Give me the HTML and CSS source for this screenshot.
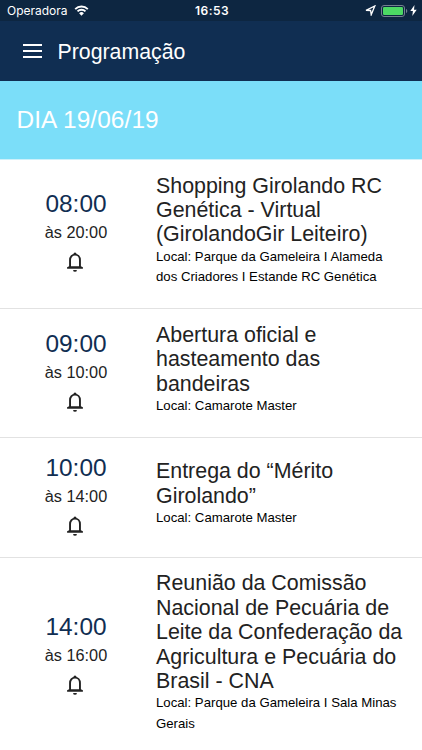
FILE: index.html
```html
<!DOCTYPE html>
<html lang="pt-BR">
<head>
    <meta charset="UTF-8">
    <meta name="viewport" content="width=device-width, initial-scale=1.0">
    <title>Programação</title>
    <link rel="stylesheet" href="styles.css">
</head>
<body>
    <svg width="0" height="0" class="sprite">
        <symbol id="bell" viewBox="0 0 18 21">
            <path d="M3.800 16V8.500C3.800 5 6 2.800 9 2.800s5.200 2.200 5.200 5.700V16" fill="none" stroke="#222" stroke-width="2"/>
            <path d="M7.400 3V2a1.600 1.600 0 0 1 3.200 0v1zM2.800 15h12.400l2.100 1v1.600H.700V16zM7 18.800h4a2 2 0 0 1-4 0z" fill="#222"/>
        </symbol>
    </svg>

    <header>
        <div class="status-bar">
            <div class="carrier">
                <span>Operadora</span>
                <svg width="15" height="11" viewBox="0 0 15 11">
                    <path d="M1.200 4.100a9 9 0 0 1 12.600 0M3.500 6.400a5.700 5.700 0 0 1 8 0" fill="none" stroke="#fff" stroke-width="1.900"/>
                    <path d="M7.500 10.800L5.100 8.300a3.400 3.400 0 0 1 4.800 0z" fill="#fff"/>
                </svg>
            </div>
            <div class="clock">16:53</div>
            <div class="indicators">
                <svg width="11" height="11" viewBox="0 0 11 11">
                    <path d="M1 5.300L9.800 1 6.200 9.800 5.600 5.500z" fill="none" stroke="#fff" stroke-width="1.300"/>
                </svg>
                <svg class="battery" width="27" height="12" viewBox="0 0 27 12">
                    <rect x=".5" y=".5" width="23" height="11" rx="2.500" fill="none" stroke="#73808f"/>
                    <rect x="2" y="2" width="20" height="8" rx="1.200" fill="#4cd964"/>
                    <path d="M25 4c1.700.500 1.700 3.500 0 4z" fill="#73808f"/>
                </svg>
                <svg width="7" height="11" viewBox="0 0 7 11">
                    <path d="M4.500 0L.300 6h2.600L2.300 11 6.700 4.700H4z" fill="#fff"/>
                </svg>
            </div>
        </div>
        <div class="toolbar">
            <div class="menu">
                <span></span>
                <span></span>
                <span></span>
            </div>
            <h1>Programação</h1>
        </div>
    </header>

    <div class="day">DIA 19/06/19</div>

    <div class="event">
        <div class="time">
            <div class="start">08:00</div>
            <div class="end">às 20:00</div>
            <svg class="bell"><use href="#bell"/></svg>
        </div>
        <div class="info">
            <h2>Shopping Girolando RC Genética - Virtual (GirolandoGir Leiteiro)</h2>
            <p>Local: Parque da Gameleira I Alameda dos Criadores I Estande RC Genética</p>
        </div>
    </div>

    <div class="event">
        <div class="time">
            <div class="start">09:00</div>
            <div class="end">às 10:00</div>
            <svg class="bell"><use href="#bell"/></svg>
        </div>
        <div class="info">
            <h2>Abertura oficial e hasteamento das bandeiras</h2>
            <p>Local: Camarote Master</p>
        </div>
    </div>

    <div class="event">
        <div class="time">
            <div class="start">10:00</div>
            <div class="end">às 14:00</div>
            <svg class="bell"><use href="#bell"/></svg>
        </div>
        <div class="info">
            <h2>Entrega do “Mérito Girolando”</h2>
            <p>Local: Camarote Master</p>
        </div>
    </div>

    <div class="event">
        <div class="time">
            <div class="start">14:00</div>
            <div class="end">às 16:00</div>
            <svg class="bell"><use href="#bell"/></svg>
        </div>
        <div class="info">
            <h2>Reunião da Comissão Nacional de Pecuária de Leite da Confederação da Agricultura e Pecuária do Brasil - CNA</h2>
            <p>Local: Parque da Gameleira I Sala Minas Gerais</p>
        </div>
    </div>
</body>
</html>
```
FILE: styles.css
```css
* {
    box-sizing: border-box;
}
body {
    margin: 0;
    height: 750px;
    overflow: hidden;
    background: #fff;
    color: #222;
    font-family: "Liberation Sans", Arial, sans-serif;
}
.sprite {
    display: block;
}
header {
    background: #102e52;
    color: #fff;
}
.status-bar {
    display: flex;
    align-items: center;
    height: 21px;
    padding: 0 5px 0 7px;
    background: #0d2641;
    font-family: Inter, sans-serif;
    font-size: 12px;
}
.carrier,
.indicators {
    display: flex;
    flex: 1;
    align-items: center;
}
.carrier {
    gap: 6px;
}
.clock {
    font-weight: 600;
    letter-spacing: 0.5px;
}
.indicators {
    justify-content: flex-end;
}
.battery {
    margin: 0 2px 0 5px;
}
.toolbar {
    display: flex;
    align-items: center;
    height: 60px;
    padding-left: 23px;
}
.menu {
    display: flex;
    flex-direction: column;
    gap: 4px;
    width: 19px;
    margin-right: 15.5px;
}
.menu span {
    height: 2px;
    background: #fff;
}
h1 {
    margin: 2px 0 0;
    font-size: 21.3px;
    font-weight: normal;
}
.day {
    height: 79px;
    padding-left: 16.5px;
    border-bottom: 1px solid #cdf1fb;
    background: #7bdef9;
    color: #fff;
    font-size: 24.4px;
    letter-spacing: 0.1px;
    line-height: 78px;
}
.event {
    display: flex;
    align-items: center;
    padding: 13.5px 0 21px;
    border-bottom: 1px solid #e2e2e2;
}
.time {
    display: flex;
    flex-direction: column;
    align-items: center;
    width: 152px;
    height: 84px;
}
.start {
    color: #102e52;
    font-size: 24.4px;
    line-height: 31px;
}
.end {
    font-size: 16.3px;
    line-height: 27px;
}
.bell {
    width: 18px;
    height: 21px;
    margin: 6px 3px 0 0;
}
.info {
    width: 250px;
    margin-left: 4px;
}
h2 {
    margin: 0;
    font-size: 21.4px;
    font-weight: normal;
    line-height: 24.4px;
}
p {
    margin: 0;
    color: #000;
    font-size: 13.2px;
    line-height: 20.3px;
}
```
